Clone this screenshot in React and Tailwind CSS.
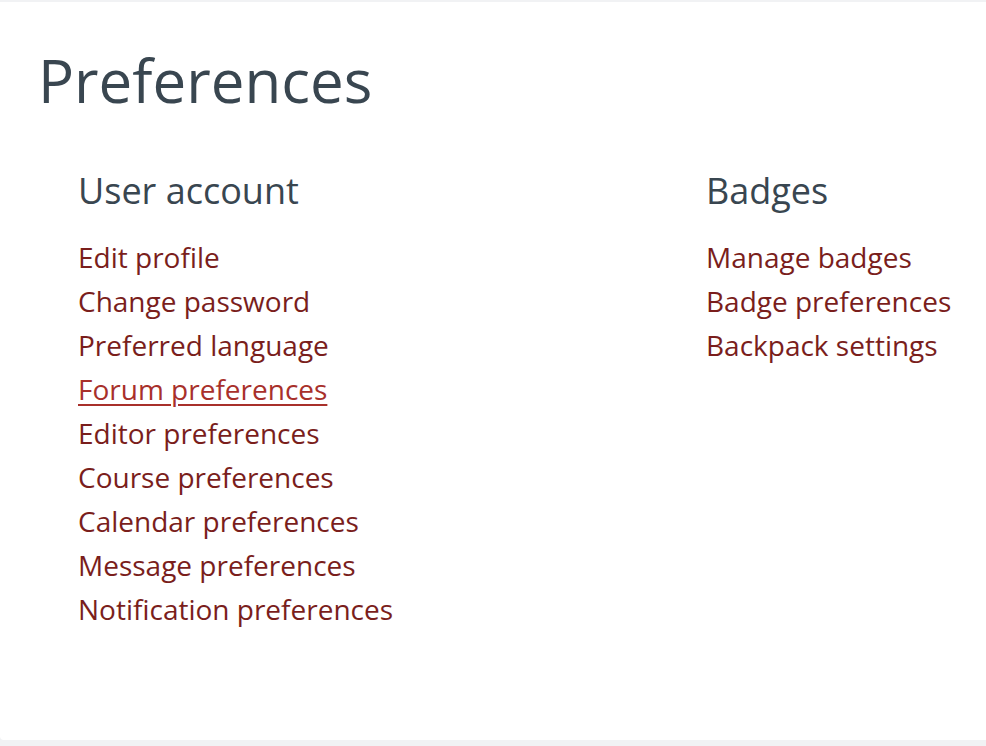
export default function App() {
  const account = [
    "Edit profile",
    "Change password",
    "Preferred language",
    "Forum preferences",
    "Editor preferences",
    "Course preferences",
    "Calendar preferences",
    "Message preferences",
    "Notification preferences",
  ];
  const badges = ["Manage badges", "Badge preferences", "Backpack settings"];

  return (
    <div className="min-h-[746px] bg-[#f1f2f4] pt-[2px] font-['Open_Sans',sans-serif]">
      <div className="h-[738px] bg-white rounded-bl-[4px] pl-[38px] pt-[42px]">
        <h2 className="text-[60px] leading-[72px] text-[#394650] font-normal">Preferences</h2>
        <div className="flex pl-[40px] pt-[51px]">
          <div className="w-[628px]">
            <h3 className="text-[36px] leading-[48px] text-[#394650] mb-[20px]">User account</h3>
            <ul>
              {account.map((t) => (
                <li key={t} className="text-[28px] leading-[44px]">
                  <a
                    href="#"
                    className={t === "Forum preferences" ? "text-[#a8302b] underline decoration-[2px] underline-offset-[4px]" : "text-[#7a1e1c]"}
                  >
                    {t}
                  </a>
                </li>
              ))}
            </ul>
          </div>
          <div>
            <h3 className="text-[36px] leading-[48px] text-[#394650] mb-[20px]">Badges</h3>
            <ul>
              {badges.map((t) => (
                <li key={t} className="text-[28px] leading-[44px]">
                  <a href="#" className="text-[#7a1e1c]">{t}</a>
                </li>
              ))}
            </ul>
          </div>
        </div>
      </div>
    </div>
  );
}
